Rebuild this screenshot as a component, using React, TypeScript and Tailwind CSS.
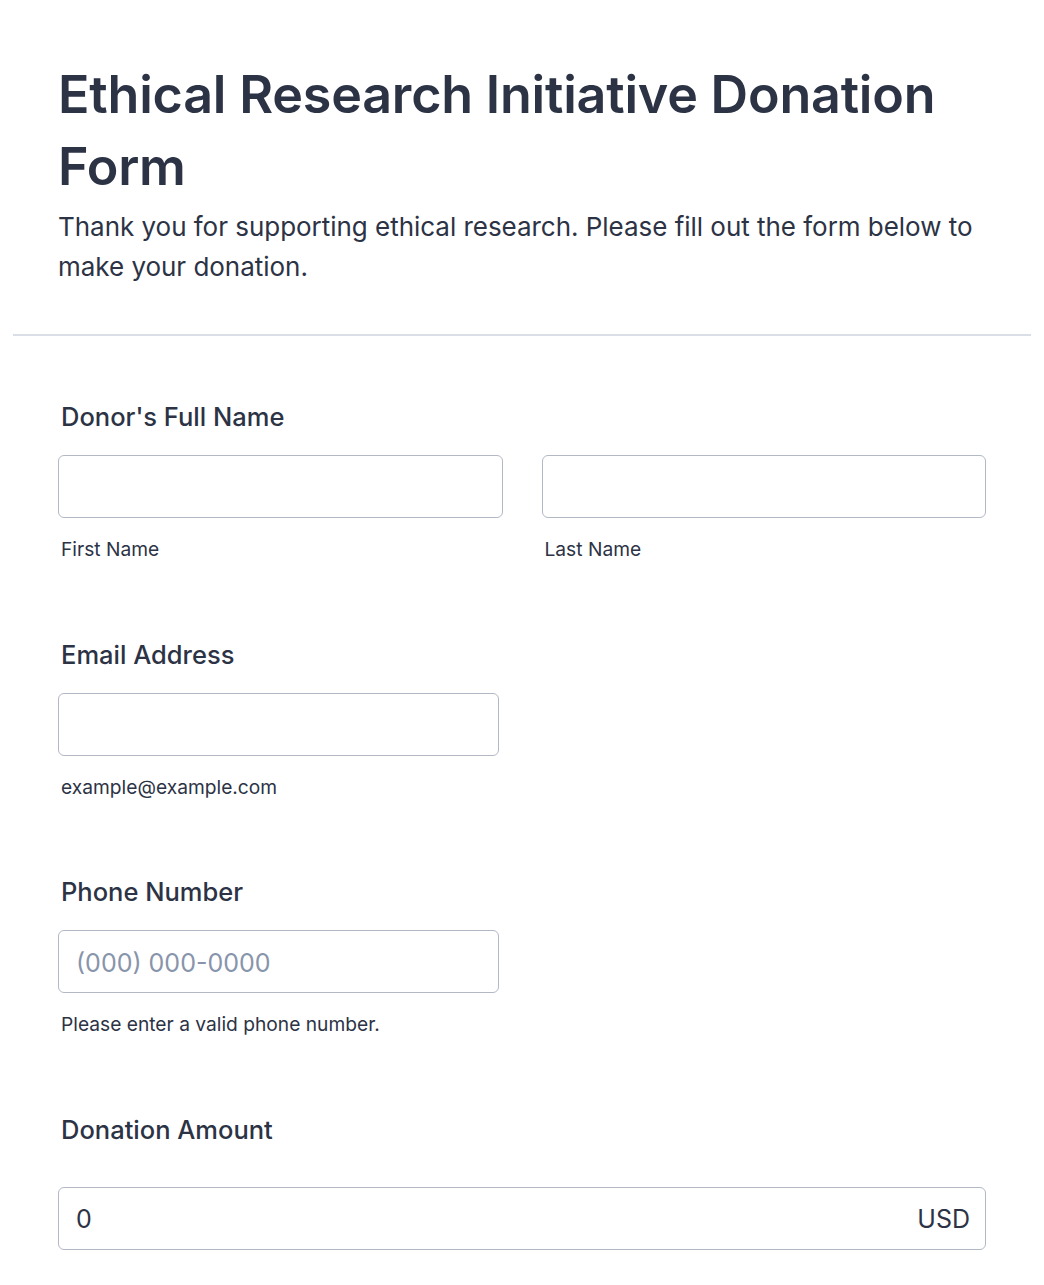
import React from "react";

const inputCls =
  "w-full h-[63px] rounded-[6px] border border-[#b3b8c5] bg-white px-[17px] pt-[2px] text-[25px] text-[#2c3345] placeholder:text-[#8894ab] outline-none font-['Inter']";

function Label({ children }: { children: React.ReactNode }) {
  return (
    <div className="pl-[3px] text-[25.5px] leading-[36px] font-medium text-[#2c3345]">{children}</div>
  );
}

function Sub({ children }: { children: React.ReactNode }) {
  return (
    <div className="pl-[3px] mt-[17px] text-[19.2px] leading-[28px] text-[#2c3345]">{children}</div>
  );
}

export default function App() {
  return (
    <div className="w-[1044px] min-h-[1285px] bg-white font-['Inter',sans-serif] text-[#2c3345]">
      <div className="mx-[13px]">
        <div className="px-[45px] pt-[59px] pb-[47px] border-b-2 border-[#dadee6]">
          <h1 className="text-[52px] leading-[72px] font-semibold tracking-[-0.2px]">
            Ethical Research Initiative Donation Form
          </h1>
          <p className="mt-[4px] text-[26px] leading-[40px] tracking-[-0.03px]">
            Thank you for supporting ethical research. Please fill out the form below to make your donation.
          </p>
        </div>
        <div className="px-[45px] pt-[63px]">
          <section>
            <Label>Donor's Full Name</Label>
            <div className="mt-[20px] grid grid-cols-2 gap-[39px]">
              <div>
                <input className={inputCls} />
                <Sub>First Name</Sub>
              </div>
              <div>
                <input className={inputCls} />
                <Sub>Last Name</Sub>
              </div>
            </div>
          </section>
          <section className="mt-[73.5px]">
            <Label>Email Address</Label>
            <div className="mt-[20px] w-[441px]">
              <input className={inputCls} />
              <Sub>example@example.com</Sub>
            </div>
          </section>
          <section className="mt-[73.5px]">
            <Label>Phone Number</Label>
            <div className="mt-[20px] w-[441px]">
              <input className={inputCls} placeholder="(000) 000-0000" />
              <Sub>Please enter a valid phone number.</Sub>
            </div>
          </section>
          <section className="mt-[73.5px]">
            <Label>Donation Amount</Label>
            <div className="mt-[39px] w-[928px] h-[63px] rounded-[6px] border border-[#b3b8c5] flex items-center justify-between pl-[17px] pr-[15px] pt-[4px] text-[25px] text-[#2c3345]">
              <span>0</span>
              <span>USD</span>
            </div>
          </section>
        </div>
      </div>
    </div>
  );
}
